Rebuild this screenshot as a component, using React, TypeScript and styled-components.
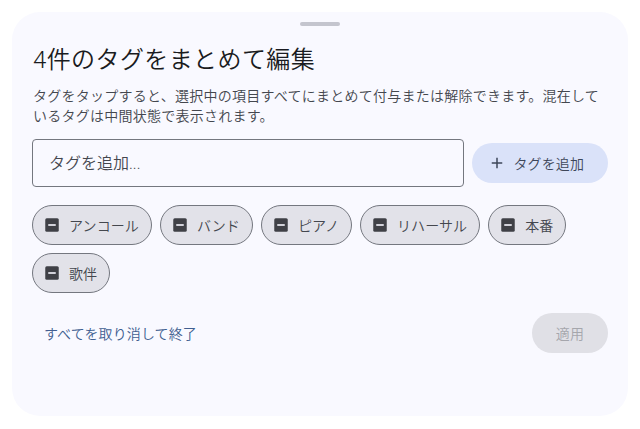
import React from "react";
import styled, { createGlobalStyle } from "styled-components";

const FONT = `Roboto, "Noto Sans CJK JP", sans-serif`;

const Global = createGlobalStyle`
  html, body { margin: 0; padding: 0; background: #ffffff; }
  body { font-family: ${FONT}; font-weight: 350; }
  * { box-sizing: border-box; }
`;

const Page = styled.div`
  padding: 12px;
`;

const Sheet = styled.section`
  width: 616px;
  height: 404px;
  background: #f9f9ff;
  border-radius: 28px;
  padding: 10px 20px 0;
  display: flex;
  flex-direction: column;
`;

const Handle = styled.div`
  align-self: center;
  width: 40px;
  height: 4px;
  border-radius: 2px;
  background: #c4c5ce;
`;

const Title = styled.h2`
  margin: 18px 0 0;
  font-family: ${FONT};
  font-weight: 350;
  font-size: 24px;
  line-height: 32px;
  letter-spacing: 0.4px;
  color: #1a1b20;
  padding-left: 1px;
`;

const Desc = styled.p`
  margin: 10px 0 0;
  font-size: 14px;
  font-weight: 350;
  line-height: 20px;
  letter-spacing: 0.25px;
  color: #44474e;
  padding-left: 1px;
`;

const InputRow = styled.div`
  margin-top: 13px;
  display: flex;
  align-items: center;
  gap: 8px;
`;

const TextInput = styled.input`
  flex: 1;
  min-width: 0;
  height: 48px;
  border: 1px solid #74777f;
  border-radius: 4px;
  background: transparent;
  padding: 0 16px;
  font-family: ${FONT};
  font-weight: 350;
  font-size: 16px;
  color: #1a1b20;
  outline: none;
  &::placeholder { color: #44474e; opacity: 1; }
`;

const TonalButton = styled.button`
  height: 40px;
  border: none;
  border-radius: 20px;
  background: #dae2f9;
  color: #3e4759;
  display: flex;
  align-items: center;
  gap: 8px;
  padding: 0 24px 0 16px;
  font-family: ${FONT};
  font-size: 14px;
  letter-spacing: 0.1px;
  font-weight: 350;
  white-space: nowrap;
`;

const ChipWrap = styled.div`
  margin-top: 18px;
  display: flex;
  flex-wrap: wrap;
  gap: 8px 8px;
`;

const Chip = styled.button`
  height: 40px;
  border: 1px solid #74777f;
  border-radius: 20px;
  background: #e2e2e9;
  color: #44474e;
  display: flex;
  align-items: center;
  gap: 8px;
  padding: 0 12px 0 10px;
  font-family: ${FONT};
  font-weight: 350;
  font-size: 14px;
  letter-spacing: 0.1px;
  white-space: nowrap;
`;

const Footer = styled.div`
  margin-top: 20px;
  display: flex;
  align-items: center;
  justify-content: space-between;
`;

const TextButton = styled.button`
  height: 40px;
  border: none;
  background: transparent;
  color: #415f91;
  padding: 0 12px;
  border-radius: 20px;
  font-family: ${FONT};
  font-weight: 350;
  font-size: 14px;
  letter-spacing: 0.1px;
`;

const FilledButton = styled.button`
  height: 40px;
  border: none;
  border-radius: 20px;
  padding: 0 24px;
  background: ${(p) => (p.disabled ? "#e0e0e6" : "#415f91")};
  color: ${(p) => (p.disabled ? "#a5a6ac" : "#ffffff")};
  font-family: ${FONT};
  font-weight: 350;
  font-size: 14px;
  letter-spacing: 0.1px;
`;

const Indeterminate = () => (
  <svg width="18" height="18" viewBox="0 0 18 18" aria-hidden="true">
    <rect x="2.25" y="2.25" width="13.5" height="13.5" rx="1.5" fill="#3f4046" />
    <rect x="5.25" y="8.1" width="7.5" height="1.8" fill="#e2e2e9" />
  </svg>
);

const PlusIcon = () => (
  <svg width="18" height="18" viewBox="0 0 24 24" aria-hidden="true">
    <path d="M19 13h-6v6h-2v-6H5v-2h6V5h2v6h6v2z" fill="#3e4759" />
  </svg>
);

const tags = ["アンコール", "バンド", "ピアノ", "リハーサル", "本番", "歌伴"];

export default function App() {
  return (
    <Page>
      <Global />
      <Sheet>
        <Handle />
        <Title>4件のタグをまとめて編集</Title>
        <Desc>
          タグをタップすると、選択中の項目すべてにまとめて付与または解除できます。混在しているタグは中間状態で表示されます。
        </Desc>
        <InputRow>
          <TextInput placeholder="タグを追加..." />
          <TonalButton>
            <PlusIcon />
            タグを追加
          </TonalButton>
        </InputRow>
        <ChipWrap>
          {tags.map((t) => (
            <Chip key={t}>
              <Indeterminate />
              {t}
            </Chip>
          ))}
        </ChipWrap>
        <Footer>
          <TextButton>すべてを取り消して終了</TextButton>
          <FilledButton disabled>適用</FilledButton>
        </Footer>
      </Sheet>
    </Page>
  );
}
